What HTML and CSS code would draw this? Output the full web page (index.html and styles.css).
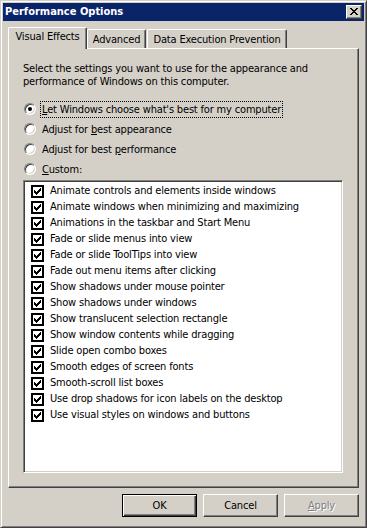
FILE: index.html
```html
<!DOCTYPE html>
<html>
<head>
<meta charset="utf-8">
<title>Performance Options</title>
<link rel="stylesheet" href="styles.css">
</head>
<body>
<div class="window">
  <div class="titlebar">
    <span class="title">Performance Options</span>
    <span class="close">
      <svg width="8" height="7" viewBox="0 0 8 7" shape-rendering="crispEdges">
        <path fill="#000" d="M0 0h2v1h-2zM6 0h2v1h-2zM1 1h2v1h-2zM5 1h2v1h-2zM2 2h4v1h-4zM3 3h2v1h-2zM2 4h4v1h-4zM1 5h2v1h-2zM5 5h2v1h-2zM0 6h2v1h-2zM6 6h2v1h-2z"/>
      </svg>
    </span>
  </div>
  <div class="body">
    <div class="tabs">
      <div class="tab tab-active">Visual Effects</div>
      <div class="tab tab-adv">Advanced</div>
      <div class="tab tab-dep">Data Execution Prevention</div>
    </div>
    <div class="panel">
      <p class="desc">Select the settings you want to use for the appearance and<br>performance of Windows on this computer.</p>
      <div class="radios">
        <div class="radio-row"><span class="radio checked"></span><span class="label focus"><u>L</u>et Windows choose what's best for my computer</span></div>
        <div class="radio-row"><span class="radio"></span><span class="label">Adjust for <u>b</u>est appearance</span></div>
        <div class="radio-row"><span class="radio"></span><span class="label">Adjust for best <u>p</u>erformance</span></div>
        <div class="radio-row"><span class="radio"></span><span class="label"><u>C</u>ustom:</span></div>
      </div>
      <div class="listbox">
        <div class="item"><span class="cb"></span>Animate controls and elements inside windows</div>
        <div class="item"><span class="cb"></span>Animate windows when minimizing and maximizing</div>
        <div class="item"><span class="cb"></span>Animations in the taskbar and Start Menu</div>
        <div class="item"><span class="cb"></span>Fade or slide menus into view</div>
        <div class="item"><span class="cb"></span>Fade or slide ToolTips into view</div>
        <div class="item"><span class="cb"></span>Fade out menu items after clicking</div>
        <div class="item"><span class="cb"></span>Show shadows under mouse pointer</div>
        <div class="item"><span class="cb"></span>Show shadows under windows</div>
        <div class="item"><span class="cb"></span>Show translucent selection rectangle</div>
        <div class="item"><span class="cb"></span>Show window contents while dragging</div>
        <div class="item"><span class="cb"></span>Slide open combo boxes</div>
        <div class="item"><span class="cb"></span>Smooth edges of screen fonts</div>
        <div class="item"><span class="cb"></span>Smooth-scroll list boxes</div>
        <div class="item"><span class="cb"></span>Use drop shadows for icon labels on the desktop</div>
        <div class="item"><span class="cb"></span>Use visual styles on windows and buttons</div>
      </div>
    </div>
    <div class="buttons">
      <div class="btn btn-default"><span>OK</span></div>
      <div class="btn"><span>Cancel</span></div>
      <div class="btn btn-disabled"><span><u>A</u>pply</span></div>
    </div>
  </div>
</div>
</body>
</html>
```

FILE: styles.css
```css
* { box-sizing: border-box; }
html, body { margin: 0; padding: 0; }
body {
  width: 367px;
  height: 528px;
  background: #d4d0c8;
  font-family: "DejaVu Sans Condensed", "DejaVu Sans", sans-serif;
  font-stretch: semi-condensed;
  font-size: 11px;
  letter-spacing: -0.17px;
  color: #000;
}
.window {
  width: 367px;
  height: 528px;
  background: #d4d0c8;
  border: 1px solid;
  border-color: #d4d0c8 #404040 #404040 #d4d0c8;
  box-shadow: inset 1px 1px #fff, inset -1px -1px #808080;
  padding: 2px;
  display: flex;
  flex-direction: column;
}
.titlebar {
  height: 18px;
  background: #0a246a;
  display: flex;
  align-items: center;
  justify-content: space-between;
  padding: 0 2px 0 2px;
}
.title {
  color: #fff;
  font-weight: bold;
  font-size: 11px;
  letter-spacing: 0;
  line-height: 18px;
}
.close {
  width: 16px;
  height: 14px;
  background: #d4d0c8;
  border: 1px solid;
  border-color: #fff #404040 #404040 #fff;
  box-shadow: inset -1px -1px #808080;
  display: flex;
  align-items: center;
  justify-content: center;
  padding: 0 1px 1px 0;
}
.close svg { display: block; }
.body {
  flex: 1;
  display: flex;
  flex-direction: column;
  padding: 6px 5px 6px 5px;
}
.tabs {
  display: flex;
  align-items: flex-end;
  height: 21px;
  position: relative;
  z-index: 2;
}
.tab {
  height: 19px;
  border-top: 1px solid #fff;
  border-left: 1px solid #fff;
  border-right: 1px solid #404040;
  box-shadow: inset -1px 0 #808080;
  border-radius: 2px 2px 0 0;
  background: #d4d0c8;
  padding: 3px 0 0 0;
  text-align: center;
  line-height: 14px;
  white-space: nowrap;
}
.tab-active {
  width: 79px;
  height: 22px;
  margin-bottom: -1px;
  padding-top: 2px;
}
.tab-adv { width: 59px; }
.tab-dep { width: 140px; margin-left: 1px; }
.panel {
  height: 440px;
  border: 1px solid;
  border-color: #fff #404040 #404040 #fff;
  box-shadow: inset -1px -1px #808080;
  padding: 13px 13px 0 14px;
  display: flex;
  flex-direction: column;
}
.desc {
  margin: 0;
  line-height: 13px;
}
.radios {
  margin-top: 11px;
  display: flex;
  flex-direction: column;
}
.radio-row {
  height: 20px;
  display: flex;
  align-items: center;
}
.radio {
  width: 12px;
  height: 12px;
  margin-left: 1px;
  border-radius: 50%;
  background: #fff;
  border: 1px solid;
  border-color: #808080 #fff #fff #808080;
  box-shadow: inset 1px 1px #404040, inset -1px -1px #d4d0c8;
  display: flex;
  align-items: center;
  justify-content: center;
}
.radio.checked::after {
  content: "";
  width: 4px;
  height: 4px;
  border-radius: 50%;
  background: #000;
}
.label {
  margin-left: 4px;
  padding: 1px 1px;
  line-height: 13px;
  border: 1px solid transparent;
}
.label.focus { border: 1px dotted #000; }
.listbox {
  margin-top: 1px;
  width: 320px;
  height: 293px;
  background: #fff;
  border: 1px solid;
  border-color: #808080 #fff #fff #808080;
  box-shadow: inset 1px 1px #404040, inset -1px -1px #d4d0c8;
  padding: 2px 2px 2px 7px;
}
.item {
  height: 16px;
  display: flex;
  align-items: center;
  white-space: nowrap;
  line-height: 16px;
}
.cb {
  width: 13px;
  height: 13px;
  flex: none;
  margin-right: 6px;
  background-color: #fff;
  background-image: url("data:image/svg+xml;utf8,<svg xmlns='http://www.w3.org/2000/svg' width='13' height='13' shape-rendering='crispEdges'><path fill='none' stroke='%23000' stroke-width='2' d='M1 1h11v11h-11z'/><path fill='%23000' d='M9 3h1v1h-1zM8 4h2v1h-2zM3 5h1v1h-1zM7 5h3v1h-3zM3 6h2v1h-2zM6 6h3v1h-3zM3 7h5v1h-5zM4 8h3v1h-3zM5 9h1v1h-1z'/></svg>");
}
.buttons {
  margin-top: 6px;
  display: flex;
  justify-content: flex-end;
  gap: 6px;
}
.btn {
  width: 75px;
  height: 23px;
  background: #d4d0c8;
  border: 1px solid;
  border-color: #fff #404040 #404040 #fff;
  box-shadow: inset -1px -1px #808080;
  display: flex;
  align-items: center;
  justify-content: center;
  line-height: 13px;
}
.btn-default {
  border: 1px solid #000;
  box-shadow: inset 1px 1px #fff, inset -1px -1px #404040, inset -2px -2px #808080;
}
.btn-disabled span {
  color: #808080;
  text-shadow: 1px 1px #fff;
}
u { text-decoration: underline; text-underline-offset: 1px; }
```
